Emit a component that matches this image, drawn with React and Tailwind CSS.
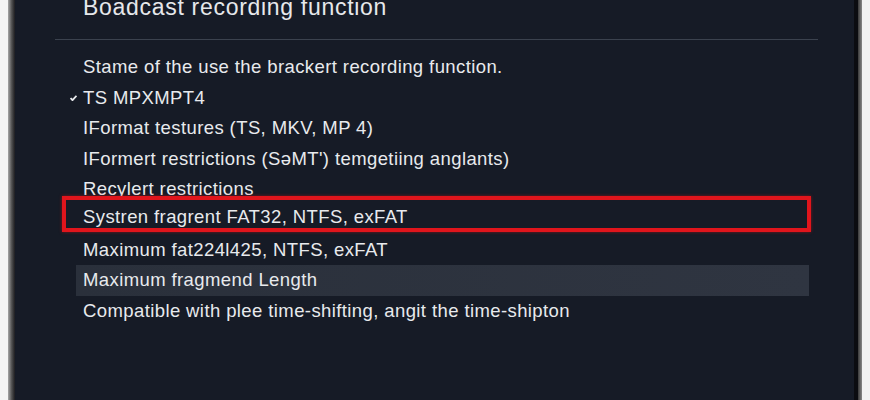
import React from "react";

const rowBase = "h-[30.4px] leading-[30.4px] whitespace-nowrap";

export default function App() {
  return (
    <div className="w-[870px] h-[400px] flex bg-[#f3f3f3] overflow-hidden" style={{ fontFamily: '"Liberation Sans", Arial, sans-serif' }}>
      <div className="w-[8px] shrink-0 bg-[#f4f4f4]" />
      <div className="w-[7px] shrink-0 bg-gradient-to-r from-[#a8a8a8] via-[#555] to-[#1c1c1f]" />
      <div className="flex-1 bg-[#161b26] text-[#e8eaed] flex flex-col">
        <div className="-mt-[4.5px] pl-[68px] text-[23px] leading-[23px] tracking-[0.7px] text-[#e6e8eb] whitespace-nowrap">
          Boadcast recording function
        </div>
        <div className="mt-[20.5px] ml-[40px] mr-[36px] h-px bg-[#3b424e]" />
        <div className="mt-[12.4px] ml-[47px] mr-[43px] flex flex-col text-[18.5px] tracking-[0.4px]">
          <div className={`${rowBase} pl-[21px]`}>Stame of the use the brackert recording function.</div>
          <div className={`${rowBase} pl-[8px] flex items-center`}>
            <svg width="7" height="6" viewBox="0 0 7 6" className="mr-[6px]">
              <path d="M0.5 3 L2.5 5.2 L6.5 0.8" stroke="#e8eaed" strokeWidth="1.8" fill="none" />
            </svg>
            <span>TS MPXMPT4</span>
          </div>
          <div className={`${rowBase} pl-[21px]`}>IFormat testures (TS, MKV, MP 4)</div>
          <div className={`${rowBase} pl-[21px]`}>IFormert restrictions (SǝMT') temgetiing anglants)</div>
          <div className={`${rowBase} pl-[21px]`}>Recylert restrictions</div>
          <div className="h-[36px] -mt-[8px] mb-[2.4px] border-[4px] border-[#e0151c] pl-[17px] pt-[7px] leading-[20px] whitespace-nowrap shadow-[0_0_3px_rgba(200,20,20,0.6)]">
            Systren fragrent FAT32, NTFS, exFAT
          </div>
          <div className={`${rowBase} pl-[21px]`}>Maximum fat224l425, NTFS, exFAT</div>
          <div className={`${rowBase} ml-[14px] mr-[2px] pl-[7px] bg-gradient-to-r from-[#2a303b] to-[#2f3541]`}>Maximum fragmend Length</div>
          <div className={`${rowBase} pl-[21px]`}>Compatible with plee time-shifting, angit the time-shipton</div>
        </div>
      </div>
      <div className="w-[4px] shrink-0 bg-[#0b0c10]" />
      <div className="w-[4px] shrink-0 bg-gradient-to-r from-[#3a3a3a] to-[#8a8a8a]" />
      <div className="w-[8px] shrink-0 bg-[#f2f2f2]" />
    </div>
  );
}
